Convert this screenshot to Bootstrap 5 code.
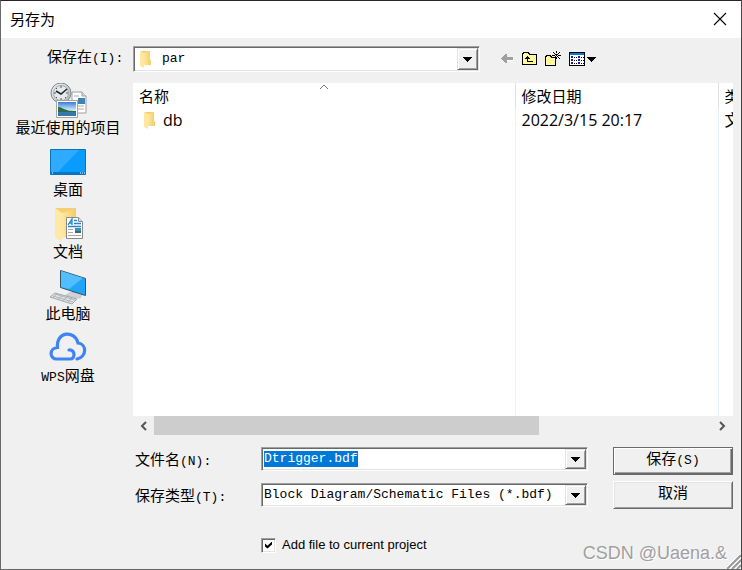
<!DOCTYPE html>
<html lang="zh-CN">
<head>
<meta charset="utf-8">
<meta name="viewport" content="width=device-width, initial-scale=1">
<title>另存为</title>
<link href="https://cdn.jsdelivr.net/npm/bootstrap@5.3.0/dist/css/bootstrap.min.css" rel="stylesheet">
<style>
  body { font: 15px/20px "Liberation Mono", "Noto Sans CJK SC", monospace; color: #000; background: #f0f0f0; }
  .dialog { min-height: 100vh; border: 1px solid #696969; border-top-color: #2b2527; border-right-color: #4a4648; background: #f0f0f0; }
  .titlebar { height: 37px; padding: 0 13px 2px 9px; background: #fff; font-family: "Open Sans", "Noto Sans CJK SC", sans-serif; }
  .titlebar h1 { font-size: 15px; line-height: 20px; }
  .plain { border: 0; padding: 0; background: transparent; color: inherit; line-height: 0; }
  .latin { font-size: 13px; }
  .toolbar { height: 45px; padding: 0 8px 3px 0; }
  .lookin-label { width: 132px; padding-left: 46px; }
  .side { width: 132px; padding-left: 2px; }
  .side a { height: 62px; color: #000; line-height: 20px; }
  .side svg { display: block; width: 40px; height: 36px; flex: none; margin-bottom: 1px; }
  .field { height: 24px; background: #fff; border: 1px solid; border-color: #a0a0a0 #fff #fff #a0a0a0; box-shadow: inset 1px 1px #696969, inset -1px -1px #e3e3e3; padding: 1px; }
  .lookin { height: 26px; flex: 0 1 347px; }
  .field select, .field input { appearance: none; border: 0; border-radius: 0; outline: 0; padding: 0 1px; margin: 0; background: transparent; color: #000; font: 13px/16px "Liberation Mono", "Noto Sans CJK SC", monospace; flex: 1 1 0; min-width: 0; }
  .field input::selection { background: #0078d7; color: #fff; }
  .drop { width: 21px; flex: none; align-self: stretch; background: #f0f0f0; border: 1px solid; border-color: #e3e3e3 #696969 #696969 #e3e3e3; box-shadow: inset 1px 1px #fff, inset -1px -1px #a0a0a0; padding: 0; display: flex; align-items: center; justify-content: center; pointer-events: none; }
  button.drop { pointer-events: auto; }
  .tools { gap: 8px; padding-left: 20px; }
  .files { margin-right: 8px; background: #fff; overflow: hidden; font-family: "Open Sans", "Noto Sans CJK SC", sans-serif; }
  .files table { table-layout: fixed; width: 100%; height: 100%; }
  .files th, .files td { padding: 0 0 0 6px; white-space: nowrap; overflow: hidden; text-overflow: clip; font-weight: 400; height: 24px; border-left: 1px solid #e8f0f8; text-align: left; vertical-align: middle; }
  .files th { height: 25px; border-left-color: #e0e0e0; position: relative; }
  .files td { font-size: 16px; }
  .files th:first-child, .files td:first-child { border-left: 0; }
  .files .filler td { height: auto; }
  .entry { gap: 6px; padding-left: 4px; }
  .c-date { width: 203px; }
  .c-type { width: 15px; }
  .sorted { position: absolute; left: 50%; top: 1px; margin-left: -5px; }
  .scroller { height: 19px; margin-right: 8px; }
  .scroller .plain { width: 21px; }
  .thumb { width: 69%; background: #cdcdcd; }
  .bottom { padding: 12px 8px 16px 134px; gap: 25px; }
  .fields { gap: 12px; }
  .row-label { width: 126px; flex: none; white-space: nowrap; margin: 3px 0 -3px; }
  .bevel { width: 120px; height: 28px; padding: 0; border: 1px solid; border-color: #fff #696969 #696969 #fff; box-shadow: inset 1px 1px #e3e3e3, inset -1px -1px #a0a0a0; background: #f0f0f0; color: #000; font-size: 15px; line-height: 20px; }
  .bevel.primary { border-color: #696969; box-shadow: inset 1px 1px #fff, inset -1px -1px #696969, inset -2px -2px #a0a0a0; }
  .actions { gap: 6px; padding-top: 0; }
  .tick { appearance: none; width: 15px; height: 15px; margin: 0; background: #fff; border: 1px solid; border-color: #a0a0a0 #fff #fff #a0a0a0; box-shadow: inset 1px 1px #696969, inset -1px -1px #e3e3e3; }
  .tick:checked::before { content: ""; display: block; width: 7px; height: 7px; margin: 3px; background: #000; clip-path: polygon(0 30%, 35% 60%, 100% 0, 100% 42%, 35% 100%, 0 70%); }
  .option { font: 13px/16px "Liberation Sans", Arial, sans-serif; gap: 6px; margin: 18px 0 0 126px; }
  .watermark { position: absolute; right: 14px; bottom: 4px; font: 18px/24px "Liberation Sans", Arial, sans-serif; color: #a0a0a0; text-shadow: 1px 1px #fff; pointer-events: none; }
  .grip { position: absolute; right: 0; bottom: 0; }
</style>
<script src="https://cdn.jsdelivr.net/npm/bootstrap@5.3.0/dist/js/bootstrap.bundle.min.js"></script>
</head>
<body>
<svg width="0" height="0" class="position-absolute" aria-hidden="true">
  <defs>
    <linearGradient id="fold" x1="0" x2="1"><stop offset="0" stop-color="#ffe8a0"/><stop offset="1" stop-color="#f2cc66"/></linearGradient>
    <linearGradient id="sky" x1="0" y1="0" x2="0" y2="1"><stop offset="0" stop-color="#377fd6"/><stop offset=".6" stop-color="#d5edf8"/></linearGradient>
    <linearGradient id="metal" x1="0" y1="0" x2="1" y2="1"><stop offset="0" stop-color="#f5f7f8"/><stop offset="1" stop-color="#a9b0b4"/></linearGradient>
    <pattern id="dither" width="2" height="2" patternUnits="userSpaceOnUse"><path fill="#ff6" d="M0 0h2v2H0z"/><path fill="#fffbd0" d="M0 0h1v1H0zM1 1h1v1H1z"/></pattern>
    <symbol id="arrow" viewBox="0 0 9 5"><path d="M0 0h9v1H8v1H7v1H6v1H5v1H4V4H3V3H2V2H1V1H0z" shape-rendering="crispEdges"/></symbol>
    <symbol id="folder" viewBox="0 0 14 18"><path d="M2 1h9v9l1 1v4H3z" fill="#f3cf70"/><path d="M1 1l4 2v15l-4-2z" fill="#ffe7a0"/><path d="M5 3l6-2v9l1 1v4H5z" fill="url(#fold)"/></symbol>
  </defs>
</svg>
<main class="dialog d-flex flex-column position-relative">
  <header class="titlebar d-flex align-items-center justify-content-between">
    <h1 class="m-0 fw-normal">另存为</h1>
    <button class="plain" type="button" aria-label="关闭"><svg width="16" height="16" viewBox="0 0 16 16"><path d="M2 2l12 12M14 2L2 14" stroke="#000" stroke-width="1.1"/></svg></button>
  </header>

  <div class="toolbar d-flex align-items-center">
    <label class="lookin-label flex-shrink-0" for="lookin">保存在<span class="latin">(I):</span></label>
    <div class="field lookin d-flex align-items-center">
      <svg class="ms-1 me-2 flex-shrink-0" width="14" height="18"><use href="#folder"/></svg>
      <select id="lookin"><option>par</option></select>
      <span class="drop"><svg width="9" height="5"><use href="#arrow"/></svg></span>
    </div>
    <div class="tools d-flex align-items-center">
      <button class="plain" type="button" aria-label="后退"><svg width="14" height="16" viewBox="0 0 14 16" shape-rendering="crispEdges"><path d="M2 8l5 5v-3h7V7z" fill="#fff"/><path d="M1 7h1V6h1V5h1V4h1V3h2v3h6v3H7v3H5v-1H4v-1H3V9H2V8H1z" fill="#a0a0a0"/></svg></button>
      <button class="plain" type="button" aria-label="向上一级"><svg width="15" height="16" viewBox="0 0 15 16" shape-rendering="crispEdges"><path d="M.5 13.5v-11h1v-1h5v1h1v1h7v10z" fill="url(#dither)" stroke="#000"/><path d="M5 5h1v1h1v1h1v1H6v2h5v1H5V8H3V7h1V6h1z"/></svg></button>
      <button class="plain" type="button" aria-label="新建文件夹"><svg width="16" height="16" viewBox="0 0 16 16" shape-rendering="crispEdges"><path d="M.5 14.5v-9h1v-1h4v1h1v1h4v8z" fill="url(#dither)" stroke="#000"/><path d="M11 0h1v2h-1zM11 3h1v2h-1zM8 1h1v1H8zM9 2h1v1H9zM14 1h1v1h-1zM13 2h1v1h-1zM7 4h3v1H7zM13 4h3v1h-3zM10 3h1v1h-1zM12 3h1v1h-1zM10 5h1v1h-1zM12 5h1v1h-1zM13 6h1v1h-1zM14 7h1v1h-1zM11 6h1v2h-1z"/></svg></button>
      <button class="plain" type="button" aria-label="查看"><svg width="28" height="16" viewBox="0 0 28 16" shape-rendering="crispEdges"><path d="M0 1h16v14H0z"/><path d="M1 4h14v10H1z" fill="#fff"/><path d="M1 2h14v2H1z" fill="#0078d7"/><path d="M2 5h2v2H2zM2 8h2v2H2zM2 11h2v2H2zM9 5h2v2H9zM9 8h2v2H9zM9 11h2v2H9z" fill="#1a1a9c"/><path d="M5 6h1v1H5zM7 6h1v1H7zM5 9h1v1H5zM7 9h1v1H7zM5 12h1v1H5zM7 12h1v1H7zM12 6h1v1h-1zM14 6h1v1h-1zM12 9h1v1h-1zM14 9h1v1h-1zM12 12h1v1h-1zM14 12h1v1h-1z"/><path d="M18 6h9v1h-1v1h-1v1h-1v1h-1v1h-1v-1h-1V9h-1V8h-1V7h-1z"/></svg></button>
    </div>
  </div>

  <div class="d-flex flex-grow-1">
    <nav class="side flex-shrink-0 d-flex flex-column" aria-label="位置">
      <a class="d-flex flex-column align-items-center text-decoration-none text-nowrap" href="#recent">
        <svg viewBox="0 0 40 36"><path d="M24 9h10l4 4v17H24z" fill="#fff" stroke="#9aa0a3"/><path d="M34 9v4h4" fill="#ddd" stroke="#9aa0a3"/><path d="M26 13h5M26 23h10M26 26h10M26 20h4" stroke="#aaa"/><path d="M30 15h7v6h-7z" fill="#3d83b8"/><circle cx="13" cy="10" r="10" fill="url(#metal)" stroke="#7e878b"/><circle cx="13" cy="10" r="7.5" fill="#e6eaec" stroke="#a2a9ad"/><path d="M13 3v2M13 15v2M6 10h2M18 10h2M8 5l1 1M17 14l1 1M8 15l1-1" stroke="#555"/><path d="M8 8l5 3 6-5" fill="none" stroke="#222" stroke-width="1.5"/><path d="M8.500 17.500h21v17h-21z" fill="#fff" stroke="#a5a5a5"/><path d="M10 19h18v14H10z" fill="url(#sky)"/><path d="M10 24c5 0 5 4 18 4v1H10z" fill="#2e6b4b"/><path d="M10 29h18v4H10z" fill="#3479a8"/></svg>
        <span>最近使用的项目</span></a>
      <a class="d-flex flex-column align-items-center text-decoration-none text-nowrap" href="#desktop">
        <svg viewBox="0 0 40 36"><path d="M2.500 4.500h35v25h-35z" fill="#0a9bff" stroke="#0873b8"/><path d="M3 5h28L9 28H3z" fill="#2eaaff"/><path d="M3 27h34v2H3z" fill="#0877c8"/><path d="M4 28h1M32 28h1M34 28h1M36 28h1" stroke="#fff"/></svg>
        <span>桌面</span></a>
      <a class="d-flex flex-column align-items-center text-decoration-none text-nowrap" href="#documents">
        <svg viewBox="0 0 40 36"><path d="M8 1h20v29H8z" fill="#f4cf75"/><path d="M7 1l7 5v29l-7-5z" fill="#ffe9a5"/><path d="M14 6l14-4v26l-14 3z" fill="url(#fold)"/><path d="M18.500 10.500h12l4 4v17h-16z" fill="#fff" stroke="#8a8a8a"/><path d="M30.500 10.500v4h4" fill="#ddd" stroke="#8a8a8a"/><path d="M20 18l4-6v6M21 16h3M26 13.500h3M26 16.500h7M20 19.500h13" stroke="#2585c7" stroke-width="1.300" fill="none"/><path d="M20 22.500h5M20 25.500h5M20 28.500h13" stroke="#aaa"/><path d="M27 21h6v5h-6z" fill="#4a88b5"/><path d="M27 24h6v2h-6z" fill="#36705d"/></svg>
        <span>文档</span></a>
      <a class="d-flex flex-column align-items-center text-decoration-none text-nowrap" href="#computer">
        <svg viewBox="0 0 40 36"><path d="M25 21l5 2v3l-6-2z" fill="#9aa2a7"/><path d="M18 26l5-3 12 2-3 4-8-1z" fill="#cdd3d6" stroke="#a8afb2" stroke-width=".5"/><path d="M12.500 1.500l25 8v17l-25-8z" fill="#20a5fa" stroke="#345566"/><path d="M13 2l22 7-14 11-8-2z" fill="#52bdff"/><path d="M2 28l5-4 22 6-5 5z" fill="#dfe3e5" stroke="#a2a8ab"/><path d="M5 27l20 6M7 25l20 6M9 25l-5 4M14 27l-5 4M19 28l-5 4M24 29l-5 5" stroke="#a5abaf" stroke-width=".8"/></svg>
        <span>此电脑</span></a>
      <a class="d-flex flex-column align-items-center text-decoration-none text-nowrap" href="#wps">
        <svg viewBox="0 0 40 36"><path d="M21 19c6-1 7 9 1 9H9C1 28 1 17 9.500 16.500 8 0 27-1 30 12c9 1 9 14-1 16" fill="none" stroke="#3f83f5" stroke-width="3.200" stroke-linecap="round"/></svg>
        <span><span class="latin">WPS</span>网盘</span></a>
    </nav>
    <div class="flex-grow-1 d-flex flex-column overflow-hidden">
      <div class="files flex-grow-1">
        <table>
          <colgroup><col><col class="c-date"><col class="c-type"></colgroup>
          <thead><tr>
            <th scope="col">名称<svg class="sorted" width="10" height="6" viewBox="0 0 10 6"><path d="M1 5l4-4 4 4" fill="none" stroke="#777"/></svg></th>
            <th scope="col">修改日期</th><th scope="col">类型</th></tr></thead>
          <tbody>
            <tr><td><div class="entry d-flex align-items-center"><svg class="flex-shrink-0" width="14" height="18"><use href="#folder"/></svg>db</div></td><td>2022/3/15 20:17</td><td>文件夹</td></tr>
            <tr class="filler"><td></td><td></td><td></td></tr>
          </tbody>
        </table>
      </div>
      <div class="scroller d-flex">
        <button class="plain flex-shrink-0" type="button" aria-label="向左滚动"><svg width="9" height="12" viewBox="0 0 9 12"><path d="M7 2L3 6l4 4" fill="none" stroke="#555" stroke-width="2"/></svg></button>
        <div class="flex-grow-1 d-flex"><div class="thumb"></div></div>
        <button class="plain flex-shrink-0" type="button" aria-label="向右滚动"><svg width="9" height="12" viewBox="0 0 9 12"><path d="M2 2l4 4-4 4" fill="none" stroke="#555" stroke-width="2"/></svg></button>
      </div>
    </div>
  </div>

  <form class="bottom d-flex">
    <div class="fields flex-grow-1 d-flex flex-column">
      <div class="d-flex align-items-center">
        <label class="row-label" for="fname">文件名<span class="latin">(N):</span></label>
        <div class="field d-flex align-items-center flex-grow-1"><input id="fname" type="text" value="Dtrigger.bdf" autocomplete="off" spellcheck="false"><button class="drop" type="button" aria-label="历史记录"><svg width="9" height="5"><use href="#arrow"/></svg></button></div>
      </div>
      <div class="d-flex align-items-center">
        <label class="row-label" for="ftype">保存类型<span class="latin">(T):</span></label>
        <div class="field d-flex align-items-center flex-grow-1"><select id="ftype"><option>Block Diagram/Schematic Files (*.bdf)</option></select><span class="drop"><svg width="9" height="5"><use href="#arrow"/></svg></span></div>
      </div>
      <div class="option d-flex align-items-center">
        <input class="tick" type="checkbox" id="addfile" checked><label for="addfile">Add file to current project</label>
      </div>
    </div>
    <div class="actions d-flex flex-column flex-shrink-0">
      <button class="bevel primary" type="button">保存<span class="latin">(S)</span></button>
      <button class="bevel" type="button">取消</button>
    </div>
  </form>
  <div class="watermark">CSDN @Uaena.&amp;</div>
  <svg class="grip" width="14" height="14" viewBox="0 0 14 14"><path d="M0 14L14 0M5 14l9-9M10 14l4-4" stroke="#999" stroke-width="2"/><path d="M-2 14L14-2M3 14L14 3M8 14l6-6" stroke="#fff"/></svg>
</main>
<script>
  const nameBox = document.getElementById('fname');
  nameBox.focus();
  nameBox.select();
</script>
</body>
</html>
